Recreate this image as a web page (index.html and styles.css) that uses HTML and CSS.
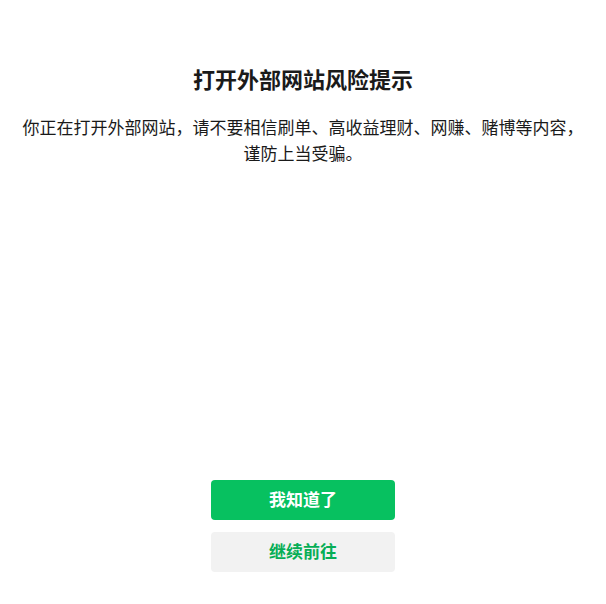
FILE: index.html
```html
<!DOCTYPE html>
<html lang="zh-CN">

<head>
    <meta charset="UTF-8">
    <title>打开外部网站风险提示</title>
    <link rel="stylesheet" href="styles.css">
</head>

<body>
    <section id="page">
        <div class="notice">
            <h2 class="noticeTitle">打开外部网站风险提示</h2>
            <p class="noticeText">你正在打开外部网站，请不要相信刷单、高收益理财、网赚、赌博等内容，谨防上当受骗。</p>
        </div>
        <div class="actions">
            <button class="btn btnPrimary">我知道了</button>
            <button class="btn btnDefault">继续前往</button>
        </div>
    </section>
</body>

</html>
```

FILE: styles.css
```css
body {
    margin: 0;
    padding: 0;
    font-family: "Noto Sans CJK SC", "Noto Sans", sans-serif;
    color: #1a1a1a;
    background: #fff;
}

#page {
    height: 604px;
    display: flex;
    flex-direction: column;
    justify-content: space-between;
    box-sizing: border-box;
    padding: 63px 20px 32px;
}

.notice {
    text-align: center;
}

.noticeTitle {
    margin: 0 0 21px;
    font-size: 22px;
    line-height: 30px;
    font-weight: 700;
}

.noticeText {
    margin: 0;
    font-size: 17px;
    line-height: 26px;
}

.actions {
    display: flex;
    flex-direction: column;
    align-items: center;
    gap: 12px;
}

.btn {
    width: 184px;
    height: 40px;
    padding: 0 0 3px;
    border: 0;
    border-radius: 4px;
    font-family: inherit;
    font-size: 17px;
    font-weight: 700;
}

.btnPrimary {
    background-color: #07c160;
    color: #fff;
}

.btnDefault {
    background-color: #f2f2f2;
    color: #06ae56;
}
```
